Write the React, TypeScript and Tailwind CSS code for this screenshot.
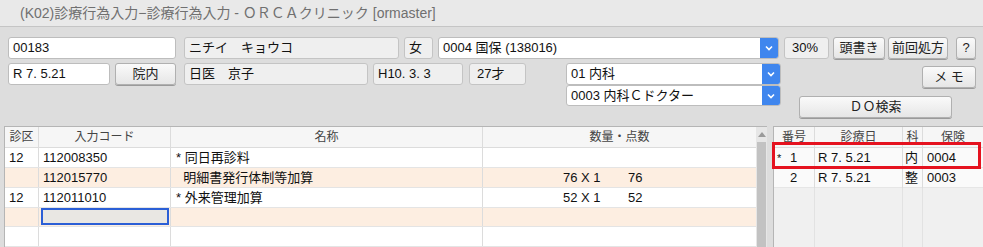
import React from "react";

const font = { fontFamily: '"Liberation Sans", "Noto Sans CJK JP", sans-serif' };

function Chevron() {
  return (
    <svg width="8" height="6" viewBox="0 0 8 6">
      <path d="M1 1.5 L4 4.5 L7 1.5" stroke="white" strokeWidth="1.6" fill="none" />
    </svg>
  );
}

function Field({ w, children, ro }: { w: string; children?: React.ReactNode; ro?: boolean }) {
  return (
    <div
      className={`${w} h-[22px] shrink-0 flex items-center px-[4px] rounded-[3px] border ${
        ro ? "bg-[#efefef] border-[#c4c4c4]" : "bg-white border-[#bdbdbd]"
      } text-[13px] text-[#111] whitespace-nowrap overflow-hidden`}
    >
      {children}
    </div>
  );
}

function Btn({ w, children, cls = "" }: { w: string; children?: React.ReactNode; cls?: string }) {
  return (
    <div
      className={`${w} h-[22px] shrink-0 flex items-center justify-center rounded-[3px] border border-[#b0b0b0] bg-gradient-to-b from-[#fafafa] to-[#e6e6e6] shadow-[0_1px_0_#9a9a9a] text-[13px] text-[#222] whitespace-nowrap ${cls}`}
    >
      {children}
    </div>
  );
}

function Select({ w, children, h = "h-[22px]" }: { w: string; children?: React.ReactNode; h?: string }) {
  return (
    <div className={`${w} ${h} shrink-0 flex rounded-[3px] border border-[#bdbdbd] bg-white overflow-hidden`}>
      <div className="flex-1 flex items-center px-[4px] text-[13px] text-[#111] whitespace-nowrap">{children}</div>
      <div className="w-[18px] bg-[#3f86ee] flex items-center justify-center">
        <Chevron />
      </div>
    </div>
  );
}

const leftCols = "grid grid-cols-[34px_132px_312px_273px]";

function LRow({
  bg,
  a,
  b,
  c,
  q,
  p,
  input,
}: {
  bg: string;
  a?: string;
  b?: string;
  c?: string;
  q?: string;
  p?: string;
  input?: boolean;
}) {
  return (
    <div className={`${leftCols} h-[20px] ${bg} border-b border-[#e4e4e4] text-[13px] text-[#111]`}>
      <div className="border-r border-[#dcdcdc] pl-[4px] flex items-center">{a}</div>
      <div className="border-r border-[#dcdcdc] pl-[4px] flex items-center">
        {input ? (
          <div className="w-[128px] h-[17px] -ml-[2px] border-2 border-[#2b5fd6] bg-[#e9e7e3]" />
        ) : (
          b
        )}
      </div>
      <div className="border-r border-[#dcdcdc] pl-[5px] flex items-center whitespace-pre">{c}</div>
      <div className="flex items-center">
        <span className="ml-[80px] w-[65px]">{q}</span>
        <span>{p}</span>
      </div>
    </div>
  );
}

function RRow({ mark, n, d, k, h }: { mark?: string; n: string; d: string; k: string; h: string }) {
  return (
    <div className="grid grid-cols-[41px_88px_20px_60px] h-[20px] bg-[#fafafa] border-b border-[#e6e6e6] text-[13px] text-[#111]">
      <div className="border-r border-[#dcdcdc] flex items-center">
        <span className="w-[16px] pl-[3px] text-[11px]">{mark}</span>
        <span>{n}</span>
      </div>
      <div className="border-r border-[#dcdcdc] pl-[3px] flex items-center">{d}</div>
      <div className="border-r border-[#dcdcdc] pl-[2px] flex items-center">{k}</div>
      <div className="pl-[4px] flex items-center">{h}</div>
    </div>
  );
}

export default function App() {
  return (
    <div className="w-[983px] h-[247px] bg-[#dddddd] overflow-hidden relative" style={font}>
      {/* title */}
      <div className="h-[27px] bg-[#e9e9e9] border-b border-[#c5c5c5] flex items-center pl-[20px] text-[14px] text-[#707070] whitespace-nowrap">
        (K02)診療行為入力−診療行為入力 - ＯＲＣＡクリニック [ormaster]
      </div>

      {/* form */}
      <div className="h-[99px] pl-[8px] pt-[10px]">
        <div className="flex items-center">
          <Field w="w-[168px]">00183</Field>
          <div className="w-[8px]" />
          <Field w="w-[215px]" ro>
            ニチイ　キョウコ
          </Field>
          <div className="w-[5px]" />
          <Field w="w-[29px]" ro>
            女
          </Field>
          <div className="w-[5px]" />
          <Select w="w-[341px]">0004 国保 (138016)</Select>
          <div className="w-[5px]" />
          <Field w="w-[45px]" ro>
            <span className="pl-[3px]">30%</span>
          </Field>
          <div className="w-[4px]" />
          <Btn w="w-[52px]">頭書き</Btn>
          <div className="w-[3px]" />
          <Btn w="w-[60px]">前回処方</Btn>
          <div className="w-[8px]" />
          <Btn w="w-[20px]">?</Btn>
        </div>

        <div className="flex items-start mt-[4px]">
          <Field w="w-[102px]">R 7. 5.21</Field>
          <div className="w-[5px]" />
          <Btn w="w-[61px]">院内</Btn>
          <div className="w-[8px]" />
          <Field w="w-[184px]" ro>
            日医　京子
          </Field>
          <div className="w-[5px]" />
          <Field w="w-[90px]" ro>
            H10. 3. 3
          </Field>
          <div className="w-[6px]" />
          <Field w="w-[57px]" ro>
            <span className="pl-[3px]">27才</span>
          </Field>
          <div className="w-[40px]" />
          <div className="flex flex-col">
            <Select w="w-[215px]">01 内科</Select>
            <Select w="w-[215px]" h="h-[21px]">
              0003 内科Ｃドクター
            </Select>
          </div>
          <div className="w-[18px]" />
          <div className="w-[177px] flex flex-col">
            <Btn w="w-[54px]" cls="self-end mt-[3px]">
              メ モ
            </Btn>
            <Btn w="w-[153px]" cls="mt-[8px]">
              ＤＯ検索
            </Btn>
          </div>
        </div>
      </div>

      {/* tables */}
      <div className="flex pl-[4px] gap-[6px] h-[121px]">
        {/* left table */}
        <div className="w-[763px] border-l border-t border-[#b5b5b5] bg-white flex">
          <div className="flex flex-col">
            <div className={`${leftCols} h-[21px] bg-[#f6f6f6] border-b border-[#dcdcdc] text-[12px] text-[#444]`}>
              <div className="border-r border-[#dcdcdc] flex items-center justify-center">診区</div>
              <div className="border-r border-[#dcdcdc] flex items-center justify-center">入力コード</div>
              <div className="border-r border-[#dcdcdc] flex items-center justify-center">名称</div>
              <div className="flex items-center justify-center">数量・点数</div>
            </div>
            <LRow bg="bg-white" a="12" b="112008350" c="* 同日再診料" />
            <LRow bg="bg-[#fdeee1]" b="112015770" c="  明細書発行体制等加算" q="76 X 1" p="76" />
            <LRow bg="bg-white" a="12" b="112011010" c="* 外来管理加算" q="52 X 1" p="52" />
            <LRow bg="bg-[#fdeee1]" input />
            <LRow bg="bg-white" />
          </div>
          <div className="w-[12px] bg-[#e6e6e6] flex flex-col items-center">
            <div className="h-[15px] flex items-center justify-center">
              <svg width="8" height="5" viewBox="0 0 8 5">
                <path d="M0 5 L4 0 L8 5 Z" fill="#9a9a9a" />
              </svg>
            </div>
            <div className="w-[9px] flex-1 bg-[#c2c2c2]" />
          </div>
        </div>

        {/* right table */}
        <div className="flex-1 border-l border-t border-[#b5b5b5] bg-[#f0f0f0] flex flex-col relative">
          <div className="grid grid-cols-[41px_88px_20px_60px] h-[21px] bg-[#f6f6f6] border-b border-[#dcdcdc] text-[12px] text-[#444]">
            <div className="border-r border-[#dcdcdc] flex items-center justify-center">番号</div>
            <div className="border-r border-[#dcdcdc] flex items-center justify-center">診療日</div>
            <div className="border-r border-[#dcdcdc] flex items-center justify-center">科</div>
            <div className="flex items-center justify-center">保険</div>
          </div>
          <RRow mark="*" n="1" d="R 7. 5.21" k="内" h="0004" />
          <RRow n="2" d="R 7. 5.21" k="整" h="0003" />
          <div className="grid grid-cols-[41px_88px_20px_60px] flex-1">
            <div className="border-r border-[#e2e2e2]" />
            <div className="border-r border-[#e2e2e2]" />
            <div className="border-r border-[#e2e2e2]" />
            <div />
          </div>
          <div className="absolute left-[-2px] top-[15px] w-[209px] h-[27px] border-[3px] border-[#e5121f]" />
        </div>
      </div>
    </div>
  );
}
